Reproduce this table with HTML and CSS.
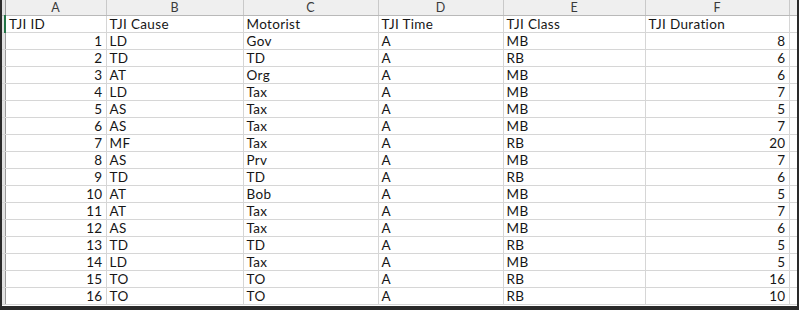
FILE: index.html
```html
<!DOCTYPE html>
<html>
<head>
<meta charset="utf-8">
<link rel="stylesheet" href="styles.css">
</head>
<body>
<div class="sheet">
<table class="grid">
<colgroup>
<col class="c-rh"><col class="c-a"><col class="c-b"><col class="c-c"><col class="c-d"><col class="c-e"><col class="c-f"><col class="c-g">
</colgroup>
<thead>
<tr class="letters"><th class="rh"></th><th>A</th><th>B</th><th>C</th><th>D</th><th>E</th><th>F</th><th class="g"></th></tr>
</thead>
<tbody>
<tr><td class="rh sel"></td><td class="sel-cell">TJI ID</td><td>TJI Cause</td><td>Motorist</td><td>TJI Time</td><td>TJI Class</td><td>TJI Duration</td><td class="g"></td></tr>
<tr><td class="rh"></td><td class="num">1</td><td>LD</td><td>Gov</td><td>A</td><td>MB</td><td class="num">8</td><td class="g"></td></tr>
<tr><td class="rh"></td><td class="num">2</td><td>TD</td><td>TD</td><td>A</td><td>RB</td><td class="num">6</td><td class="g"></td></tr>
<tr><td class="rh"></td><td class="num">3</td><td>AT</td><td>Org</td><td>A</td><td>MB</td><td class="num">6</td><td class="g"></td></tr>
<tr><td class="rh"></td><td class="num">4</td><td>LD</td><td>Tax</td><td>A</td><td>MB</td><td class="num">7</td><td class="g"></td></tr>
<tr><td class="rh"></td><td class="num">5</td><td>AS</td><td>Tax</td><td>A</td><td>MB</td><td class="num">5</td><td class="g"></td></tr>
<tr><td class="rh"></td><td class="num">6</td><td>AS</td><td>Tax</td><td>A</td><td>MB</td><td class="num">7</td><td class="g"></td></tr>
<tr><td class="rh"></td><td class="num">7</td><td>MF</td><td>Tax</td><td>A</td><td>RB</td><td class="num">20</td><td class="g"></td></tr>
<tr><td class="rh"></td><td class="num">8</td><td>AS</td><td>Prv</td><td>A</td><td>MB</td><td class="num">7</td><td class="g"></td></tr>
<tr><td class="rh"></td><td class="num">9</td><td>TD</td><td>TD</td><td>A</td><td>RB</td><td class="num">6</td><td class="g"></td></tr>
<tr><td class="rh"></td><td class="num">10</td><td>AT</td><td>Bob</td><td>A</td><td>MB</td><td class="num">5</td><td class="g"></td></tr>
<tr><td class="rh"></td><td class="num">11</td><td>AT</td><td>Tax</td><td>A</td><td>MB</td><td class="num">7</td><td class="g"></td></tr>
<tr><td class="rh"></td><td class="num">12</td><td>AS</td><td>Tax</td><td>A</td><td>MB</td><td class="num">6</td><td class="g"></td></tr>
<tr><td class="rh"></td><td class="num">13</td><td>TD</td><td>TD</td><td>A</td><td>RB</td><td class="num">5</td><td class="g"></td></tr>
<tr><td class="rh"></td><td class="num">14</td><td>LD</td><td>Tax</td><td>A</td><td>MB</td><td class="num">5</td><td class="g"></td></tr>
<tr><td class="rh"></td><td class="num">15</td><td>TO</td><td>TO</td><td>A</td><td>RB</td><td class="num">16</td><td class="g"></td></tr>
<tr><td class="rh"></td><td class="num">16</td><td>TO</td><td>TO</td><td>A</td><td>RB</td><td class="num">10</td><td class="g"></td></tr>
</tbody>
</table>
</div>
</body>
</html>
```

FILE: styles.css
```css
html, body {
  margin: 0;
  padding: 0;
  background: #ffffff;
}
.sheet {
  width: 795px;
  height: 306px;
  border-left: 2px solid #2a2a2a;
  border-right: 2px solid #2a2a2a;
  border-bottom: 4px solid #2a2a2a;
  overflow: hidden;
  background: #ffffff;
}
.grid {
  border-collapse: collapse;
  table-layout: fixed;
  width: 795px;
  font-family: Lato, "Open Sans", "Liberation Sans", sans-serif;
  font-size: 13.5px;
  letter-spacing: 0.35px;
  color: #161616;
}
.c-rh { width: 3px; }
.c-a { width: 101px; }
.c-b { width: 137px; }
.c-c { width: 135px; }
.c-d { width: 125px; }
.c-e { width: 142px; }
.c-f { width: 144px; }
.c-g { width: 8px; }
.grid td, .grid th {
  height: 15px;
  padding: 1px 3px 0 3px;
  border-right: 1px solid #d6d6d6;
  border-bottom: 1px solid #d6d6d6;
  white-space: nowrap;
  overflow: hidden;
  text-align: left;
  font-weight: normal;
  line-height: 15px;
}
.letters th {
  height: 15px;
  line-height: 15px;
  background: #efefef;
  border-right: 1px solid #c9c9c9;
  border-bottom: 1px solid #b9b9b9;
  text-align: center;
  color: #3a3a3a;
  font-size: 12.5px;
  letter-spacing: 0;
  padding: 0;
}
.grid .rh {
  background: #e2e2e2;
  border-right: 1px solid #9a9a9a;
  padding: 0;
}
.grid .rh.sel {
  border-right: 2px solid #217346;
}
.grid .num {
  text-align: right;
}
.grid .g {
  padding: 0;
}
.letters th.g {
  background: #efefef;
}
```
